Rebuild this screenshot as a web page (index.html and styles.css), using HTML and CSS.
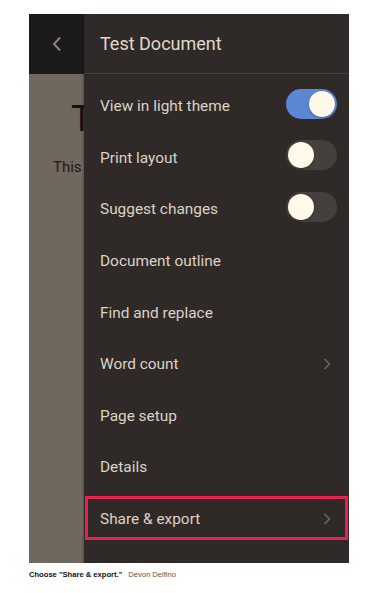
FILE: index.html
```html
<html>
	<head>
		<link rel="stylesheet" href="styles.css">
	</head>
	<body>
		<div class="shot">
			<div class="doc">
				<div class="doc-bar">
					<svg class="back" width="10" height="16" viewBox="0 0 10 16"><path d="M8 1.5 L2 8 L8 14.5" fill="none" stroke="#8b8580" stroke-width="2"/></svg>
				</div>
				<div class="doc-title">T</div>
				<div class="doc-body">This</div>
			</div>
			<div class="menu">
				<div class="menu-head">Test Document</div>
				<div class="menu-list">
					<div class="item"><span>View in light theme</span><span class="toggle on"></span></div>
					<div class="item"><span>Print layout</span><span class="toggle"></span></div>
					<div class="item"><span>Suggest changes</span><span class="toggle"></span></div>
					<div class="item"><span>Document outline</span></div>
					<div class="item"><span>Find and replace</span></div>
					<div class="item"><span>Word count</span><svg class="chev" width="8" height="12" viewBox="0 0 8 12"><path d="M1.5 1 L6.5 6 L1.5 11" fill="none" stroke="#6b645e" stroke-width="1.6"/></svg></div>
					<div class="item"><span>Page setup</span></div>
					<div class="item"><span>Details</span></div>
					<div class="item marked"><span>Share &amp; export</span><svg class="chev" width="8" height="12" viewBox="0 0 8 12"><path d="M1.5 1 L6.5 6 L1.5 11" fill="none" stroke="#6b645e" stroke-width="1.6"/></svg></div>
				</div>
			</div>
		</div>
		<p class="caption"><b>Choose "Share &amp; export."</b><span class="credit">Devon Delfino</span></p>
	</body>
</html>
```

FILE: styles.css
```css
body {
	margin: 0;
	background: #ffffff;
	font-family: Roboto, "Liberation Sans", sans-serif;
}
.shot {
	display: flex;
	margin: 14px 0 0 29px;
	width: 320px;
	height: 549px;
	overflow: hidden;
	background: #70675e;
}
.doc {
	width: 55px;
	flex: none;
	overflow: hidden;
}
.doc-bar {
	height: 60px;
	background: #1d1b1a;
	display: flex;
	align-items: center;
	padding-left: 23px;
}
.doc-title {
	font-size: 36px;
	color: #141312;
	margin: 25px 0 0 42px;
	line-height: 40px;
}
.doc-body {
	font-size: 15px;
	color: #1e1c1a;
	margin: 19px 0 0 24px;
}
.menu {
	flex: 1;
	background: #2f2a27;
	box-shadow: -1px 0 2px rgba(0, 0, 0, 0.25);
}
.menu-head {
	height: 59px;
	border-bottom: 1px solid #46403b;
	display: flex;
	align-items: center;
	padding-left: 16px;
	font-size: 18px;
	color: #e0d8cc;
}
.menu-list {
	padding-top: 6.5px;
}
.item {
	position: relative;
	height: 51.6px;
	display: flex;
	align-items: center;
	justify-content: space-between;
	padding: 0 12px 0 16px;
	font-size: 15.4px;
	color: #dcd3c6;
}
.chev {
	margin-right: 6px;
}
.toggle {
	position: relative;
	width: 51px;
	height: 30px;
	border-radius: 15px;
	background: #45403b;
	margin-top: -5px;
}
.toggle::after {
	content: "";
	position: absolute;
	top: 2px;
	left: 2px;
	width: 26px;
	height: 26px;
	border-radius: 50%;
	background: #fff9ea;
	box-shadow: 0 1px 2px rgba(0, 0, 0, 0.3);
}
.toggle.on {
	background: #5b86d4;
}
.toggle.on::after {
	left: 23px;
}
.marked::after {
	content: "";
	position: absolute;
	top: 3px;
	bottom: 5px;
	left: 1px;
	right: 1px;
	border: 3px solid #e9214f;
}
.caption {
	margin: 7px 0 0 29px;
	font-family: "Liberation Sans", Arial, sans-serif;
	font-size: 7.6px;
	color: #111111;
}
.credit {
	color: #555555;
	margin-left: 6px;
}
```
